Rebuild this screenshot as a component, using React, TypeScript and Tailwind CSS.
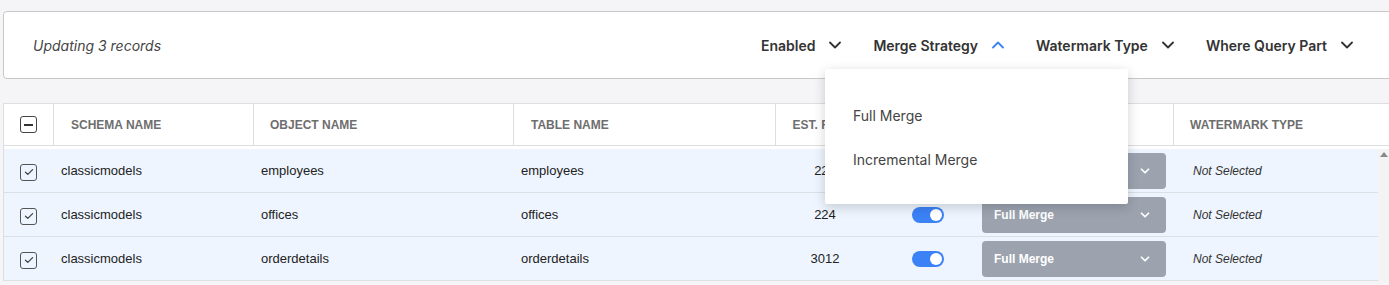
import { ChevronDown } from "lucide-react"

type Row = { schema: string; object: string; table: string; est: string }

const rows: Row[] = [
	{ schema: "classicmodels", object: "employees", table: "employees", est: "224" },
	{ schema: "classicmodels", object: "offices", table: "offices", est: "224" },
	{ schema: "classicmodels", object: "orderdetails", table: "orderdetails", est: "3012" },
]

const Chevron = ({ up, color }: { up?: boolean; color: string }) => (
	<svg width="12" height="8" viewBox="0 0 12 8" fill="none" className="ml-[14px]">
		<path
			d={up ? "M1 6.5 6 1.5l5 5" : "M1 1.5l5 5 5-5"}
			stroke={color}
			strokeWidth="1.8"
			strokeLinecap="round"
			strokeLinejoin="round"
		/>
	</svg>
)

const Filter = ({ label, up }: { label: string; up?: boolean }) => (
	<div className="flex items-center">
		<span className="text-[14px] font-semibold text-[#333]">{label}</span>
		<Chevron up={up} color={up ? "#3b82f6" : "#333"} />
	</div>
)

const CheckBox = () => (
	<div className="w-[17px] h-[17px] rounded-[3px] border-[1.5px] border-[#555] flex items-center justify-center">
		<svg width="10" height="8" viewBox="0 0 10 8" fill="none">
			<path d="M1.5 4.2 3.8 6.4 8.6 1.6" stroke="#444" strokeWidth="1.3" strokeLinecap="round" strokeLinejoin="round" />
		</svg>
	</div>
)

const cols = "grid grid-cols-[49px_200px_260px_262px_100px_100px_198px_1fr]"

export default function App() {
	return (
		<div className="relative w-[1389px] h-[285px] overflow-hidden bg-[#f5f5f7] pl-[3px] pt-[11px] font-['Liberation_Sans',Arial,sans-serif]">
			<div className="h-[68px] mr-[-12px] flex items-center bg-white border border-[#c8c8c8] rounded-[4px] pl-[29px] pr-[47px] font-['Inter',sans-serif]">
				<span className="italic text-[14px] text-[#444]">Updating 3 records</span>
				<div className="ml-auto flex items-center gap-[32px]">
					<Filter label="Enabled" />
					<Filter label="Merge Strategy" up />
					<Filter label="Watermark Type" />
					<Filter label="Where Query Part" />
				</div>
			</div>

			<div className="mt-[24px] w-[1386px] border-l border-t border-[#dedede] bg-white">
				<div className={`${cols} h-[42px] border-b border-[#dedede] text-[12px] font-bold uppercase text-[#6e6e6e]`}>
					<div className="flex items-center justify-center">
						<div className="w-[17px] h-[17px] rounded-[3px] border-[1.5px] border-[#444] flex items-center justify-center">
							<div className="w-[9px] h-[2px] bg-[#333]" />
						</div>
					</div>
					<div className="flex items-center border-l border-[#dedede] pl-[17px]">Schema Name</div>
					<div className="flex items-center border-l border-[#dedede] pl-[16px]">Object Name</div>
					<div className="flex items-center border-l border-[#dedede] pl-[17px]">Table Name</div>
					<div className="flex items-center justify-center border-l border-[#dedede]">Est. Rows</div>
					<div className="flex items-center justify-center border-l border-[#dedede]">Enabled</div>
					<div className="flex items-center border-l border-[#dedede] pl-[17px]">Merge Strategy</div>
					<div className="flex items-center border-l border-[#dedede] pl-[16px]">Watermark Type</div>
				</div>
				<div className="h-[3px] bg-white" />
				<div className="flex">
					<div className="flex-1">
						{rows.map((r) => (
							<div key={r.object} className={`${cols} h-[44px] bg-[#eef5fe] border-b border-[#dcdfe3] text-[13px] text-[#222]`}>
								<div className="flex items-center justify-center pt-[3px]">
									<CheckBox />
								</div>
								<div className="flex items-center pl-[8px]">{r.schema}</div>
								<div className="flex items-center pl-[8px]">{r.object}</div>
								<div className="flex items-center pl-[8px]">{r.table}</div>
								<div className="flex items-center justify-center">{r.est}</div>
								<div className="flex items-center pl-[37px]">
									<div className="w-[32px] h-[16px] rounded-full bg-[#3b82f6] flex items-center justify-end pr-[2px]">
										<div className="w-[12px] h-[12px] rounded-full bg-white" />
									</div>
								</div>
								<div className="flex items-center px-[7px]">
									<div className="w-full h-[36px] rounded-[4px] bg-[#9ca3af] flex items-center pl-[12px] pr-[14px] text-[12px] font-bold text-white">
										<span>Full Merge</span>
										<ChevronDown size={14} strokeWidth={3} className="ml-auto text-white" />
									</div>
								</div>
								<div className="flex items-center pl-[20px] italic text-[12px] text-[#333]">Not Selected</div>
							</div>
						))}
					</div>
					<div className="w-[11px] bg-[#f3f3f3] flex justify-center pt-[3px]">
						<div className="w-0 h-0 border-l-[4px] border-r-[4px] border-b-[5px] border-l-transparent border-r-transparent border-b-[#8a8a8a]" />
					</div>
				</div>
			</div>

			<div className="absolute left-[825px] top-[69px] w-[303px] h-[135px] bg-white rounded-[2px] shadow-[0_3px_12px_rgba(0,0,0,0.18)] py-[24px] font-['Inter',sans-serif] text-[14px] text-[#444]">
				<div className="h-[44px] flex items-center px-[28px]">Full Merge</div>
				<div className="h-[44px] flex items-center px-[28px]">Incremental Merge</div>
			</div>
		</div>
	)
}
